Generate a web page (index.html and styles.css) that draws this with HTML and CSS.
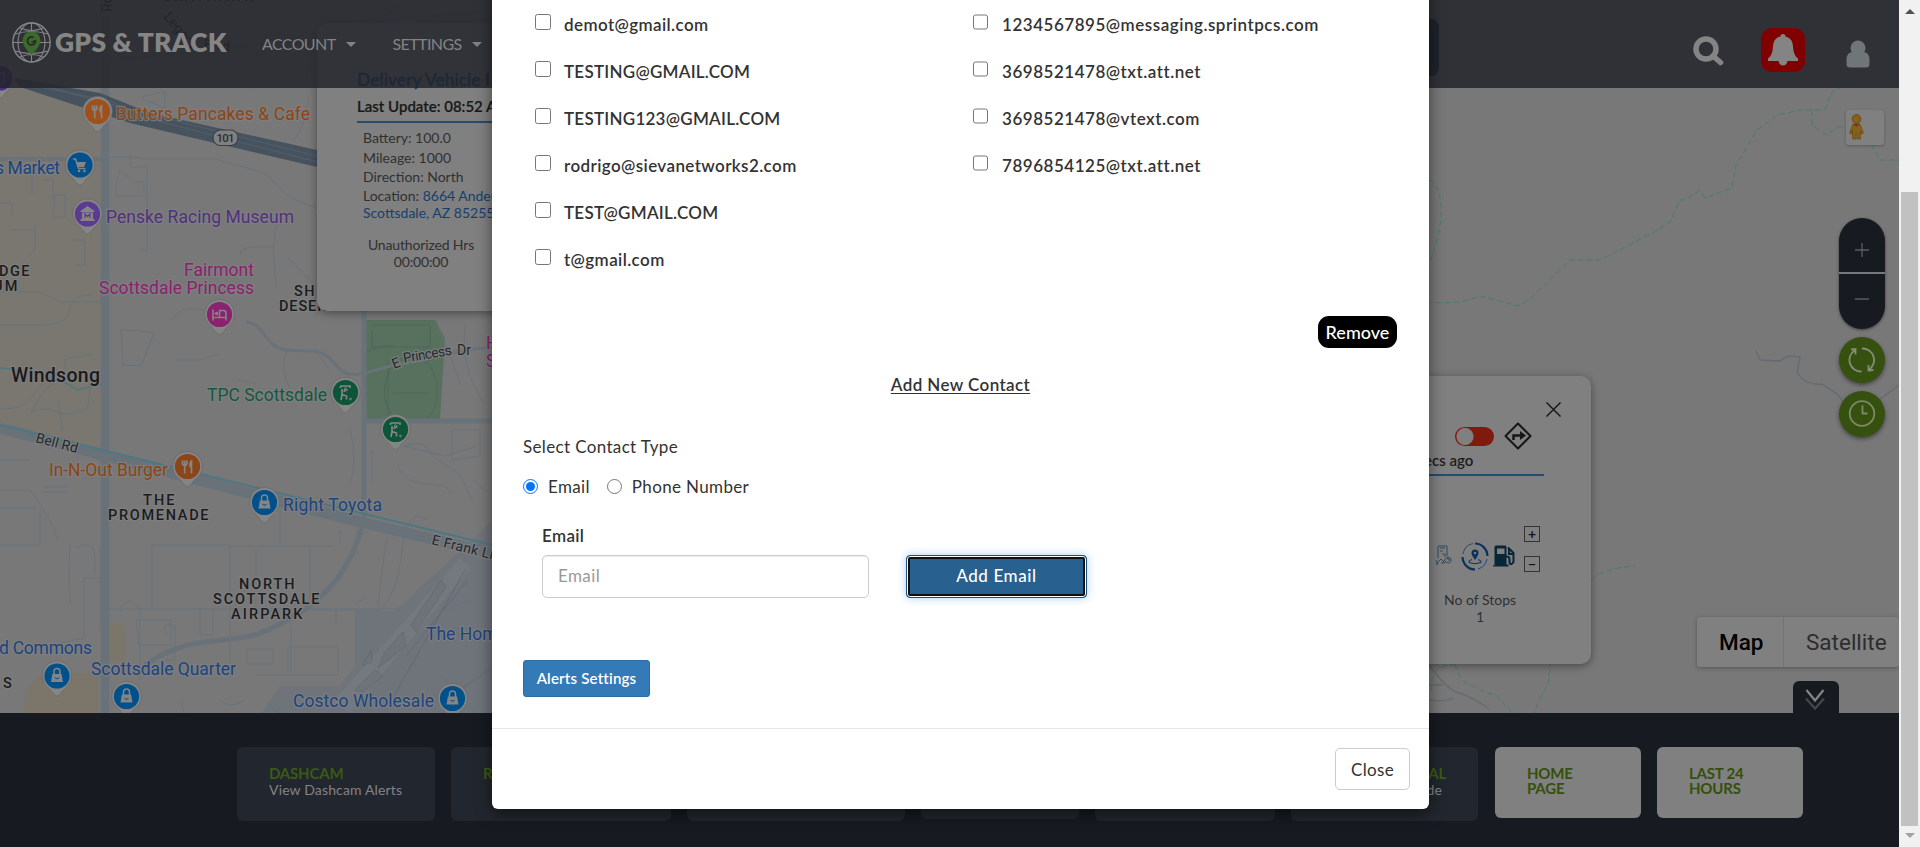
FILE: index.html
```
<!DOCTYPE html>
<html lang="en">
<head>
<meta charset="utf-8">
<title>GPS &amp; Track</title>
<link rel="stylesheet" href="styles.css">
</head>
<body>
<div class="app">
<div class="page">
  <section class="map">
    <svg class="map-canvas" viewBox="0 0 1899 713" width="1899" height="713">
      <defs>
        <g id="pin"><path d="M0 20C-3 20-5 15-9 11.500A14.800 14.800 0 1 1 9 11.500C5 15 3 20 0 20Z" fill="#858585" stroke="#686868" stroke-width=".8"/><circle r="12.600"/></g>
        <g id="bag" fill="#858585"><path d="M-4.600-2H4.600L6 6H-6Z"/><path d="M-3-1.500V-4.500a3 3 0 0 1 6 0V-1.500" fill="none" stroke="#858585" stroke-width="1.500"/><path d="M-2 1.500q2 2.300 4 0" fill="none" stroke="#00508c" stroke-width="1.100"/></g>
        <g id="fork"><path d="M-5-6V-2.500q2.200 3 4.400 0V-6M-2.800-6V7M4-6.500V7" fill="none" stroke="#858585" stroke-width="1.700"/><path d="M4-6.500q-3.500 2-2 7.500h2Z" fill="#858585"/></g>
        <g id="golf" fill="none" stroke="#858585"><path d="M-5-6.500H4.500V-4.500M-5-6.500V-4.500M-3.500-3.500V2.500M-3.500 2L1 3.500V7M-3.500 2L-4.500 7.500M-2-1L2-3" stroke-width="1.700"/><circle cx="0" cy="-3.500" r="1.200"/><circle cx="5" cy="6.500" r=".9"/></g>
      </defs>
      <rect width="1899" height="713" fill="#787878"/>
      <g fill="#7a7770">
        <path d="M0 84L100 106V452L0 424Z"/>
      </g>
      <g fill="#7c756a"><path d="M106 624h15q8 6 4 38h-19Z"/><path d="M24 713q0-42 34-40h40v40Z"/><path d="M462 713l20-28 12 2v26Z"/></g>
      <path d="M355 611h40l97-90V713H262l18-27h60l15-20Z" fill="#6f737a"/>
      <path d="M333 702L460 558l10 10-120 145Z" fill="#747980"/>
      <path d="M363 320H435l10 18-5 81H367Z" fill="#58705e"/>
      <g fill="none" stroke="#69727a" stroke-width="1">
        <path d="M370 325h60v22h-58V330M395 362c-14 18-14 42 0 57M427 362c14 18 14 42 0 57M395 364c10-10 24-10 32 0M393 393h36M388 360v58M366 352l15-6h14" stroke="#4c6759"/>
        <path d="M105 157h28q12 3 22 2h60q20 6 43 12c15 5 22 22 40 30l20 8M130 155v12h17v83h-8M120 170l14 12h10v14h-28v-12ZM277 290c-4-30-5-50 0-65M240 255q0-8 15-8h18M288 258l28 28v30M142 97L165 91V108L145 100ZM293 142q15-20 15-45M148 5q18 20 60 30M245 50l5 40M306 88q-1-20 10-40M360 0v23M440 0l30 28"/>
        <path d="M0 325h42c45 0 12-30 50-30M0 409c45 0 25-30 65-35v-15l28-5M31 412q18-35 42-38t14 34q-20 10-30 4t-26 0M58 401l5 30M0 460h30M0 490h30q22 30 28 50M0 508h36M40 510v35H0M75 548q20-10 20 12v15M43 487h25M43 492h25"/>
        <path d="M120 330q15 0 34 3l-13 33-18-1-2-35M172 320q10-18 40-7M175 360h25l20-6M238 380l18 4M288 348q-10 20 2 40M315 348l14 22M350 427q8 38 0 56M372 450v35M404 446c25-8 20 5 36 15s20 10 32 40M404 446l40 10 33-10M398 465c10 30 40 10 55 28M452 430v30l28-4V430ZM475 480q10 15 20 13M465 325q-5 45 20 80M436 320l25 65"/>
        <path d="M70 545q-2 30 0 60M84 578h23M84 578v60l-23 5M100 545v85M152 545V610M152 545h78v128M107 609H402M230 546h104M256 548v60M280 510v35M310 545v65h70q17-15 22-60t25-30M340 545v-15M357 530v25M390 523q-10 50-12 87M120 612q8-20 20-2v70M136 620h35v25h-32ZM200 610v25h13V610M165 635v-10h10v35h-10M247 649h26v15h-26ZM256 675H338v-28h-50v25M291 626V672M336 610v15M357 540l12-10M181 700l3 13M220 700q10 10 25 0M266 700q10 15 17 13M433 650q25-30 40-20M440 675l35 38M355 605l10-7M450 610q15-15 35-5"/>
        <path d="M45 180h8v20M35 225v25q-15 15-20 20M10 230h25M55 195h10v22h-12ZM70 240h15v25h-10M0 292h40l20 10h42M0 203h12v12M32 195v-20"/>
      </g>
      <g fill="none" stroke="#697279">
        <path d="M105 0V713" stroke-width="8.500"/>
        <path d="M0 159H105" stroke-width="4"/>
        <path d="M0 428L360 522 492 553" stroke-width="11"/>
        <path d="M364 310V515Q350 600 255 635C210 645 190 635 145 665" stroke-width="5"/>
        <path d="M364 421H492" stroke-width="5"/>
        <path d="M246 322c18 0 18 25 40 28s35-5 50 15 36 3 60 0 60-17 96-17M460 690L492 668" stroke-width="3"/>
        <path d="M105 60Q300 45 365 20l127-8M380 20L405 0" stroke-width="2.500"/>
      </g>
      <g fill="none" stroke="#4d7882" stroke-width="2"><path d="M0 425L492 545"/><path d="M0 368q55 5 77 22l25-6" stroke-width="1.500"/></g>
      <path d="M14 78L100 93 150 113 317 150V167L130 123Q90 110 20 87Z" fill="#46535f"/>
      <path d="M17 82L110 101 150 119 317 162M30 82L120 107 317 156" fill="none" stroke="#55626f" stroke-width=".8"/>
      <g stroke="#59666d" stroke-width="1" fill="none" opacity=".6">
        <path d="M390 703L466 568M405 657L468 580"/><path d="M372 662l-9 3 8-15Z"/><path d="M411 625L441 580l5 7-30 45ZM385 652l18-20 3 14-28 22ZM355 690l20-20 8 6-20 16Z" fill="#6b7077"/>
      </g>
      <g fill="none" stroke="#3e7d67" stroke-width="1" stroke-dasharray="6 3" opacity=".85">
        <path d="M1899 50L1877 55 1852 68 1848 84 1832 92 1826 107 1824 110H1800L1778 115 1757 130 1745 150 1736 165 1732 188 1705 198 1700 190 1685 200H1680L1670 222 1658 230 1600 260H1570L1540 290 1519 306 1480 296Q1460 305 1429 302M1812 110v15l14 10 12-8H1862L1880 160H1899M1429 180q10 2 12 25t-12 60M1591 580q12-12 45-14M1591 583L1578 590M1551 660L1548 684 1540 698 1534 713M1456 665q-28-2-24 28M1455 664q5 18 15 20 15 10 25 10l5 5 12 14"/>
      </g>
      <g fill="none" stroke="#656b72" stroke-width="1.300"><path d="M1756 351l4 9 20 1 8-5 12 1-3 15q8 14 25 12l15 10 8 10M1899 385l-20 15M1429 665q18 25 30 28t30 16M1429 700q18 2 24-2M1429 685h14"/></g>
      <g class="map-label">
        <text x="162" y="1" class="area" textLength="93">GRAYHAWK</text>
        <text transform="translate(102 12) rotate(-90)" class="road" x="0" y="10">Rd</text>
        <text transform="translate(163 17) rotate(50)" class="road">Legacy</text><text transform="translate(203 49) rotate(5)" class="road">Blvd</text>
        <text x="116" y="120" fill="#8c4515" textLength="194">Butters Pancakes &amp; Cafe</text>
        <text x="-5" y="173.500" fill="#1b4480" textLength="65">s Market</text>
        <text x="106" y="222.500" fill="#50327f" textLength="188">Penske Racing Museum</text>
        <text x="184" y="275.500" fill="#8a226f" textLength="70">Fairmont</text>
        <text x="99" y="293.500" fill="#8a226f" textLength="155">Scottsdale Princess</text>
        <text x="-1" y="275.500" class="area" textLength="32">DGE</text>
        <text x="-7" y="290.500" class="area" textLength="26">UM</text>
        <text x="294" y="295.500" class="area" textLength="22">SH</text>
        <text x="279" y="310.500" class="area" textLength="58">DESERT</text>
        <text x="11" y="381.500" class="town" textLength="89">Windsong</text>
        <text x="207" y="401" fill="#17573d" textLength="120">TPC Scottsdale</text>
        <text x="49" y="475.500" fill="#8c4515" textLength="119">In-N-Out Burger</text>
        <text x="143" y="504.500" class="area" textLength="33">THE</text>
        <text x="108" y="519.500" class="area" textLength="102">PROMENADE</text>
        <text x="283" y="511" fill="#1b4480" textLength="99">Right Toyota</text>
        <text transform="translate(35 442) rotate(15)" class="road" textLength="43">Bell Rd</text>
        <text transform="translate(394 369) rotate(-21)" class="road">E</text><text transform="translate(404 363) rotate(-10)" class="road" textLength="49">Princess</text><text transform="translate(457 355)" class="road">Dr</text>
        <text transform="translate(431 544) rotate(14)" class="road" textLength="86">E Frank Lloyd</text>
        <text x="239" y="589" class="area" textLength="57">NORTH</text>
        <text x="213" y="604" class="area" textLength="108">SCOTTSDALE</text>
        <text x="231" y="619" class="area" textLength="73">AIRPARK</text>
        <text x="426" y="640" fill="#1b4480">The Home D</text>
        <text x="-1" y="654" fill="#1b4480" textLength="93">d Commons</text>
        <text x="91" y="675" fill="#1b4480" textLength="145">Scottsdale Quarter</text>
        <text x="293" y="707" fill="#1b4480" textLength="141">Costco Wholesale</text>
        <text x="3" y="688" class="area">S</text><text x="-9" y="703" class="area">S</text>
        <text x="486" y="349" fill="#8a226f">H</text><text x="486" y="367" fill="#8a226f">S</text>
      </g>
      <rect x="213" y="130" width="25" height="15.500" rx="7.500" fill="#808080" stroke="#3c3f42" stroke-width="1.200"/>
      <text x="216.500" y="141.800" class="shield" textLength="18">101</text>
      <g transform="translate(0 78)"><use href="#pin" fill="#4b2c80"/><path d="M-4-5H4V5H-4Z" fill="none" stroke="#777" stroke-width="1.500" stroke-dasharray="2 1"/></g>
      <g transform="translate(97.500 111.500)"><use href="#pin" fill="#a0501b"/><use href="#fork"/></g>
      <g transform="translate(187.500 466.500)"><use href="#pin" fill="#8a4518"/><use href="#fork"/></g>
      <g transform="translate(80 165)"><use href="#pin" fill="#00508c"/><path d="M-4-3H6L4 2H-2.500Z" fill="#858585"/><path d="M-7-6H-4.500L-1.500 3.500H5.500" fill="none" stroke="#858585" stroke-width="1.400"/><circle cx="-1" cy="6" r="1.300" fill="#858585"/><circle cx="4.500" cy="6" r="1.300" fill="#858585"/></g>
      <g transform="translate(87.500 214)"><use href="#pin" fill="#5b3a91"/><path d="M-7-3L0-8 7-3V-2H-7ZM-5.500-1.500H5.500V5.500H-5.500ZM-7 5h14v2H-7Z" fill="#858585"/><path d="M-2.500 4V0L0 2.500 2.500 0V4" fill="none" stroke="#5b3a91" stroke-width="1.200"/></g>
      <g transform="translate(219.500 314.500)"><use href="#pin" fill="#8a226f"/><path d="M-6.500-5V6M-6.500 3H6.500M6.500 6V-1.500Q6.500-4 4-4H0V2.500" fill="none" stroke="#858585" stroke-width="1.600"/><circle cx="-3" cy="-1" r="1.700" fill="#858585"/></g>
      <g transform="translate(345.500 392.500)"><use href="#pin" fill="#0c5538"/><use href="#golf"/></g>
      <g transform="translate(395.500 429.500)"><use href="#pin" fill="#0c5538"/><use href="#golf"/></g>
      <g transform="translate(264.500 502.500)"><use href="#pin" fill="#00508c"/><use href="#bag"/></g>
      <g transform="translate(57 676)"><use href="#pin" fill="#00508c"/><use href="#bag"/></g>
      <g transform="translate(126.500 696.500)"><use href="#pin" fill="#00508c"/><use href="#bag"/></g>
      <g transform="translate(452.500 698.500)"><use href="#pin" fill="#00508c"/><use href="#bag"/></g>
    </svg>

    <article class="info info-left">
      <h3>Delivery Vehicle I</h3>
      <p class="update">Last Update: 08:52 AM</p>
      <p class="row">Battery: 100.0</p><p class="row">Mileage: 1000</p><p class="row">Direction: North</p>
      <p class="row loc">Location: <span>8664 Anderson<br>Scottsdale, AZ 85255</span></p>
      <p class="hrs">Unauthorized Hrs<br>00:00:00</p>
    </article>

    <article class="info info-right">
      <svg class="x" width="15" height="15" viewBox="0 0 15 15"><path d="M.5.5l14 14M14.500.5l-14 14" stroke="#191919" stroke-width="1.500"/></svg>
      <div class="tools"><span class="toggle"></span>
        <svg width="28" height="28" viewBox="0 0 28 28" fill="none" stroke="#161616"><path d="M14 1.500L26.500 14 14 26.500 1.500 14Z" stroke-width="2" stroke-linejoin="round"/><path d="M9.500 18v-4.500h8" stroke-width="2.500"/><path d="M16 9l6 4.500-6 4.500Z" fill="#161616" stroke="none"/></svg></div>
      <p class="ago">ecs ago</p>
      <div class="icons">
        <svg width="17" height="21" viewBox="0 0 17 21" fill="none" stroke="#2f4a5c"><path d="M3 13V1H12V11M5 3H10M5 6h3M7.500 9h2.500v3M1 19l5-5 4 4H6M1 15l2 4H1M13 12q4 1 3 4t-5 1 2-5v3h2"/></svg>
        <svg width="28" height="29" viewBox="0 0 28 29" fill="none" stroke="#0b315c"><path d="M14 1.500A12.500 13 0 0 1 26.500 14M14 27.500A12.500 13 0 0 1 1.500 15" stroke-width="2.200"/><path d="M2 12A12.500 13 0 0 1 12 1.500M26 17A12.500 13 0 0 1 17 27" stroke-width=".7"/><path d="M14 18Q10.500 13 10.500 11a3.500 3.500 0 0 1 7 0Q17.500 13 14 18Z" fill="#0b315c" stroke="none"/><circle cx="14" cy="11" r="1.200" fill="#808080" stroke="none"/><path d="M11 17.500q-4 1-3 3 6 2.500 12 0 1-2-3-3"/></svg>
        <svg width="22" height="22" viewBox="0 0 22 22"><path d="M1.500 21V2Q1.500.5 3 .5H12Q13.500.5 13.500 2V19.500H15.500V21.500H0V19.500Z" fill="#072638"/><path d="M4 3.500h7.500v5.500H4Z" fill="#808080"/><path d="M13 11.500q3.500-.5 3.500 3v3q1.500 3.500 4-.5V8l-5.500-5.500M16 4v5h4" fill="none" stroke="#072638" stroke-width="2"/></svg>
        <div class="steps"><b>+</b><b>−</b></div>
      </div>
      <p class="stops">No of Stops<br>1</p>
    </article>

    <div class="pegman"><svg width="15" height="26" viewBox="0 0 15 26"><circle cx="7.500" cy="5" r="4.300" fill="#85611a" stroke="#684711"/><path d="M4 10H11L14.500 19 12 20 11.500 16V25H8V19H7V25H3.500V16L3 20 .5 19Z" fill="#85611a" stroke="#684711" stroke-width=".7"/><path d="M4.500 10h6l-3 3Z" fill="#74351a"/></svg></div>
    <div class="controls">
      <div class="zoom">
        <span><svg width="14" height="14" viewBox="0 0 14 14"><path d="M0 7H14M7 0V14" stroke="#5a5c60" stroke-width="1.300"/></svg></span>
        <span><svg width="14" height="14" viewBox="0 0 14 14"><path d="M0 7H14" stroke="#5a5c60" stroke-width="1.300"/></svg></span>
      </div>
      <div class="round"><svg width="28" height="28" viewBox="0 0 28 28" fill="none" stroke="#858c78" stroke-width="1.800"><path d="M13.500 25.500A11.500 11.500 0 0 1 6.500 4.500M3 3.500L7.500 3V8.500M14 2.500A11.500 11.500 0 0 1 21 23.500M20.500 19v5.500L25.500 24"/></svg></div>
      <div class="round"><svg width="28" height="28" viewBox="0 0 28 28" fill="none" stroke="#7c8a62" stroke-width="1.800"><circle cx="14" cy="13.500" r="12.300"/><path d="M14.500 5.500V13.500H19.500"/></svg></div>
    </div>
    <div class="map-type"><span class="on">Map</span><span>Satellite</span></div>
    <div class="collapse"><svg width="22" height="22" viewBox="0 0 22 22" fill="none" stroke-width="2.200"><path d="M2 9.500l9 10 9-10" stroke="#44474c"/><path d="M2.500 1l8.500 10.500L19.500 1" stroke="#858585"/></svg></div>
  </section>

  <header class="top">
    <div class="brand">
      <svg width="39" height="41" viewBox="0 0 39 41" fill="none" stroke="#84868a" stroke-width="1.100"><ellipse cx="19.500" cy="20.500" rx="18.700" ry="19.500" stroke-width="1.400"/><ellipse cx="19.500" cy="20.500" rx="13.500" ry="19.500"/><path d="M19.500 1V40M1 20.500h37M3 12q16-5 33 0M3 29q16 5 33 0M8 6q12 5 23 0M8 35q12-5 23 0"/><path d="M19.500 33Q10.500 24 10.500 18.500a9 9 0 0 1 18 0Q28.500 24 19.500 33Z" fill="#3d6a2a" stroke="none"/><path d="M21.500 15.500a4 4 0 1 0 2 3.500L19.500 20" stroke="#252a2a" stroke-width="1.800"/></svg>
      <span>GPS &amp; TRACK</span>
    </div>
    <nav><span>ACCOUNT</span><i></i><span class="second">SETTINGS</span><i></i></nav>
    <div class="search-box"></div>
    <div class="top-icons">
      <svg width="31" height="30" viewBox="0 0 31 30" fill="none" stroke="#848484"><circle cx="13" cy="13" r="10" stroke-width="5.500"/><path d="M20 20l7.500 6.500" stroke-width="5.500" stroke-linecap="round"/></svg>
      <div class="bell"><svg width="30" height="32" viewBox="0 0 30 32" fill="#848484"><path d="M15 0q2.500 0 2.500 2.500 7 1.500 7.500 10 .5 9 5 12v2.500H0v-2.500q4.500-3 5-12 .500-8.500 7.500-10Q12.500 0 15 0ZM10.500 27h9q-1 4.500-4.500 4.500T10.500 27Z"/></svg></div>
      <svg width="24" height="28" viewBox="0 0 24 28" fill="#707578"><circle cx="12" cy="8" r="7.500"/><path d="M7 12H17Q23.500 12 23.500 20V24Q23.500 27.500 20 27.500H4Q.5 27.500.5 24V20Q.5 12 7 12Z"/></svg>
    </div>
  </header>

  <footer class="dock">
    <div class="card w1"><b>DASHCAM</b><span>View Dashcam Alerts</span></div>
    <div class="card w2"><b>R</b></div>
    <div class="card w3"></div>
    <div class="card w4"></div>
    <div class="card w5"></div>
    <div class="card w6"><b>AL</b><span>de</span></div>
    <div class="card light"><b>HOME<br>PAGE</b></div>
    <div class="card light"><b>LAST 24<br>HOURS</b></div>
  </footer>
</div>

<div class="modal">
  <div class="modal-body">
    <div class="contacts">
      <ul class="mails">
        <li><input type="checkbox"><span>demot@gmail.com</span></li>
        <li><input type="checkbox"><span class="caps">TESTING@GMAIL.COM</span></li>
        <li><input type="checkbox"><span class="caps">TESTING123@GMAIL.COM</span></li>
        <li><input type="checkbox"><span>rodrigo@sievanetworks2.com</span></li>
        <li><input type="checkbox"><span class="caps">TEST@GMAIL.COM</span></li>
        <li><input type="checkbox"><span>t@gmail.com</span></li>
      </ul>
      <ul class="phones">
        <li><input type="checkbox"><span>1234567895@messaging.sprintpcs.com</span></li>
        <li><input type="checkbox"><span>3698521478@txt.att.net</span></li>
        <li><input type="checkbox"><span>3698521478@vtext.com</span></li>
        <li><input type="checkbox"><span>7896854125@txt.att.net</span></li>
      </ul>
    </div>
    <button class="remove">Remove</button>
    <h4><span>Add New Contact</span></h4>
    <p class="select"><span>Select Contact Type</span></p>
    <div class="radios"><input type="radio" name="t" checked><label class="r1">Email</label><input type="radio" name="t"><label class="r2">Phone Number</label></div>
    <div class="form">
      <div class="field"><label>Email</label><input type="text" placeholder="Email"></div>
      <button class="add">Add Email</button>
    </div>
    <button class="alerts">Alerts Settings</button>
  </div>
  <div class="modal-foot"><button class="close">Close</button></div>
</div>

<div class="scroll"><i class="up"></i><div class="thumb"></div><i class="down"></i></div>
</div>
</body>
</html>
```
FILE: styles.css
```
* { box-sizing: border-box; }
body { margin: 0; font-family: Lato, "Noto Sans", sans-serif; color: #333; overflow: hidden; }
p, h3, h4, ul { margin: 0; padding: 0; list-style: none; }
button { font-family: inherit; padding: 0; }
.app { position: relative; display: flex; width: 1920px; height: 847px; overflow: hidden; }
.page { position: relative; width: 1899px; height: 847px; overflow: hidden; background: #171a21; }

/* Map */
.map { position: relative; height: 713px; overflow: hidden; }
.map-canvas { display: block; }
.map-label text { font: 17.5px Roboto, sans-serif; paint-order: stroke; stroke: #808080; stroke-width: 2.5px; stroke-opacity: .8; }
.map-label .area { font-size: 14.5px; font-weight: 500; fill: #1c1c1e; letter-spacing: 1.5px; }
.map-label .town { font-size: 19.5px; font-weight: 500; fill: #1a1a1d; }
.map-label .road { font-size: 14px; fill: #25282e; }
.shield { font: 500 11.5px Roboto, sans-serif; fill: #2b2d30; }

.info { position: absolute; background: #808080; border-radius: 10px; box-shadow: 0 2px 8px rgba(0,0,0,.4); }
.info-left { left: 317px; top: 23px; width: 260px; height: 288px; padding: 44px 0 0 40px; font-size: 14px; color: #303030; white-space: nowrap; }
.info-left h3 { font-size: 17.5px; font-weight: 500; line-height: 26px; color: #0a3f78; -webkit-text-stroke: .4px; }
.update { font-size: 15px; font-weight: 600; line-height: 26px; height: 30px; color: #191919; border-bottom: 2px solid #264b6c; margin-bottom: 5px; -webkit-text-stroke: .2px; }
.row { line-height: 19.5px; padding-left: 6px; }
.loc { line-height: 17px; padding-top: 0; }
.loc span { color: #173f6b; }
.hrs { line-height: 17px; width: 126px; margin-top: 15px; padding-left: 2px; text-align: center; letter-spacing: -.15px; }
.info-right { left: 1391px; top: 376px; width: 200px; height: 288px; padding: 26px 0 0 56px; }
.x { display: block; margin-left: 99px; }
.tools { display: flex; align-items: center; gap: 10px; margin: 5px 0 0 8px; }
.toggle { width: 39px; height: 19px; border-radius: 10px; background: radial-gradient(circle at 10px 50%, #808080 8px, transparent 9px), #801a0c; }
.ago { font-size: 15px; font-weight: 600; color: #1d1d1d; line-height: 20px; height: 26px; border-bottom: 2px solid #264b6c; margin-left: -23px; width: 120px; }
.icons { display: flex; align-items: flex-start; margin: 50px 0 0 -10px; }
.icons > svg { margin-top: 19px; }
.icons > svg:nth-child(1) { margin-left: -2px; }
.icons > svg:nth-child(2) { margin: 16px 0 0 9px; }
.icons > svg:nth-child(3) { margin-left: 4px; }
.steps { display: flex; flex-direction: column; gap: 14px; margin-left: 9px; }
.steps b { width: 16px; height: 16px; border: 1px solid #333; font: 700 14px/14px Lato, sans-serif; text-align: center; color: #161616; }
.stops { font-size: 14px; line-height: 17px; text-align: center; width: 90px; margin: 19px 0 0 -12px; color: #303030; }

.pegman { position: absolute; left: 1846px; top: 110px; width: 38px; height: 35px; padding: 4px 3px; background: #808080; border-radius: 3px; box-shadow: 0 1px 3px rgba(0,0,0,.25); }
.controls { position: absolute; left: 1839px; top: 218px; width: 46px; }
.zoom { height: 111px; border-radius: 23px; background: #171a21; overflow: hidden; box-shadow: 0 1px 3px rgba(0,0,0,.5); }
.zoom span { display: flex; justify-content: center; height: 54px; padding-top: 25px; }
.zoom span + span { border-top: 2px solid #77777c; height: 57px; padding-top: 18px; }
.round { display: flex; align-items: center; justify-content: center; width: 46px; height: 46px; margin-top: 8px; border-radius: 50%; background: #365010; box-shadow: 0 2px 4px rgba(0,0,0,.45); }
.map-type { position: absolute; left: 1697px; top: 617px; display: flex; height: 50px; background: #808080; border-radius: 3px; box-shadow: 0 1px 4px rgba(0,0,0,.3); font: 22.5px/51px Roboto, sans-serif; color: #2d2d2d; }
.map-type span { width: 115px; padding-left: 22px; }
.map-type .on { width: 87px; border-right: 1px solid #747474; font-weight: 500; color: #000; }
.collapse { position: absolute; left: 1793px; top: 681px; width: 46px; height: 32px; padding: 8px 11px; border-radius: 6px 6px 0 0; background: #171a21; }

/* Header */
.top { position: absolute; left: 0; top: 0; display: flex; width: 1899px; height: 88px; background: rgba(35,36,42,.84); }
.brand { display: flex; align-items: center; width: 250px; height: 84px; padding-left: 12px; gap: 4px; white-space: nowrap; }
.brand span { font-size: 26.5px; font-weight: 800; letter-spacing: .2px; color: #858585; }
nav { display: flex; align-items: center; width: 242px; height: 86px; padding-left: 12px; font-size: 16px; letter-spacing: -.6px; color: #828385; }
nav i { margin: 3px 0 0 10px; border: 5px solid transparent; border-top-color: #828385; border-bottom: 0; }
nav .second { margin-left: 37px; }
.search-box { width: 947px; height: 57px; margin-top: 19px; border-radius: 8px; background: #1e222b; }
.top-icons { display: flex; align-items: flex-start; margin-left: 254px; padding-top: 36px; }
.bell { display: flex; align-items: center; justify-content: center; width: 44px; height: 44px; margin: -8px 41px 0 37px; border-radius: 11px; background: #800000; }
.top-icons > svg:last-child { margin-top: 4px; }

/* Bottom dock */
.dock { display: flex; align-items: flex-start; gap: 16px; height: 134px; padding: 34px 0 0 237px; background: #171a21; }
.card { flex: none; height: 74px; padding: 18px 32px 0; border-radius: 6px; background: #22262e; font-size: 14px; line-height: 18px; letter-spacing: .15px; color: #828385; white-space: nowrap; }
.card b { display: block; font-size: 15px; line-height: 15px; padding-top: 1px; font-weight: 700; letter-spacing: -.2px; color: #3b5a12; }
.w1 { width: 198px; } .w2 { width: 220px; } .w3 { width: 218px; } .w4 { width: 158px; height: 72px; } .w5 { width: 180px; }
.w6 { width: 187px; text-align: right; }
.w6 span { margin-right: 4px; }
.light { width: 146px; height: 71px; background: #808080; }
.w6 + .light { margin-left: 1px; }
.light b { color: #34500c; }

/* Modal */
.modal { position: absolute; left: 492px; top: -40px; width: 937px; height: 849px; background: #fff; border-radius: 6px; box-shadow: 0 5px 15px rgba(0,0,0,.5); font-size: 17px; letter-spacing: .35px; }
.modal-body { height: 768px; padding: 41px 31px 0; }
.contacts { display: flex; height: 315px; }
.mails { width: 437px; padding-left: 12px; }
.contacts li { display: flex; height: 47px; padding-top: 13px; font-weight: 600; line-height: 22px; letter-spacing: .4px; white-space: nowrap; }
.contacts .caps { letter-spacing: .25px; }
.contacts input { flex: none; width: 16px; height: 16px; margin: 0 13px 0 0; }
.phones { padding-left: 13px; }
.contacts .phones input { width: 15px; margin-right: 14px; }
.phones li { letter-spacing: .52px; }
.remove { display: block; width: 79px; height: 32px; margin-left: 795px; border: 0; border-radius: 11px; background: #000; color: #fff; font-size: 18px; font-weight: 500; }
h4 { margin-top: 26px; text-align: center; font-size: 17px; line-height: 22px; font-weight: 600; letter-spacing: .4px; text-decoration: underline; text-underline-offset: 2px; }
.select { margin-top: 40px; font-size: 17px; line-height: 22px; }
.radios { display: flex; align-items: center; height: 22px; margin-top: 17px; }
.radios input { width: 15px; height: 15px; margin: 0 10px 0 0; }
.r1 { margin-right: 17px; }
.form { display: flex; align-items: flex-end; gap: 37px; margin: 28px 0 0 19px; }
.field label { display: block; height: 30px; line-height: 22px; font-weight: 600; font-size: 17px; }
.field input { display: block; width: 327px; height: 43px; padding: 0 15px 2px; border: 1px solid #ccc; border-radius: 5px; box-shadow: inset 0 1px 1px rgba(0,0,0,.075); font: 17px Lato, sans-serif; letter-spacing: .4px; }
.field input::placeholder { color: #999; }
.add { width: 181px; height: 43px; padding-bottom: 2px; border: 1px solid #204d74; border-radius: 4px; background: #286090; color: #fff; font-size: 17px; font-weight: 500; letter-spacing: .6px; box-shadow: inset 0 0 0 1px #fff, inset 0 0 0 3px #101010, 0 0 8px rgba(102,175,233,.6); }
.alerts { display: block; width: 127px; height: 37px; margin-top: 62px; padding-bottom: 2px; border: 1px solid #2e6da4; border-radius: 3px; background: #337ab7; color: #fff; font-size: 15px; font-weight: 600; letter-spacing: .2px; }
.modal-foot { height: 81px; padding: 19px 19px 0; border-top: 1px solid #e5e5e5; }
.close { display: block; width: 75px; height: 42px; margin-left: auto; border: 1px solid #ccc; border-radius: 5px; background: #fff; color: #333; font-size: 17px; letter-spacing: .3px; }

/* Scrollbar */
.scroll { width: 21px; background: #f1f1f1; display: flex; flex-direction: column; align-items: center; padding-top: 9px; }
.thumb { width: 17px; height: 634px; margin-top: 178px; background: #c1c1c1; }
.up, .down { border: 5px solid transparent; }
.up { border-top: 0; border-bottom-color: #505050; }
.down { border-bottom: 0; border-top-color: #a3a3a3; margin-top: 7px; }
```
